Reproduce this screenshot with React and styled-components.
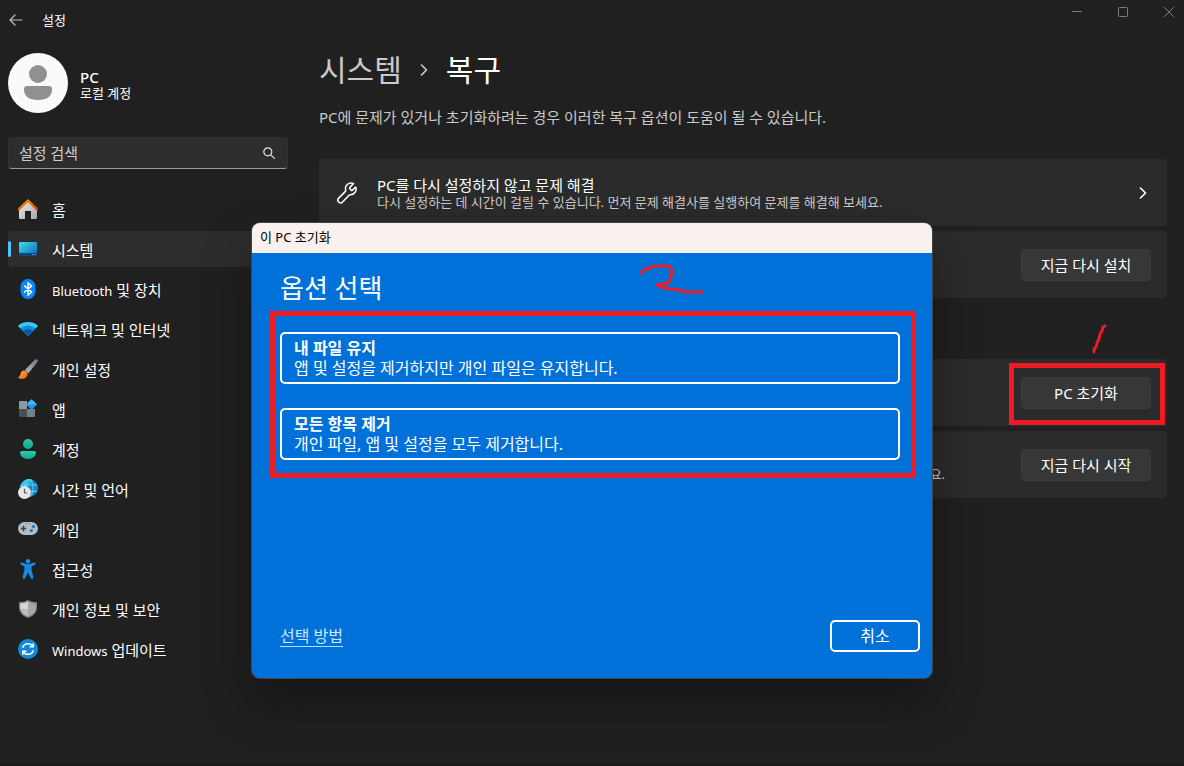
import styled, { createGlobalStyle } from "styled-components";

const GlobalStyle = createGlobalStyle`
  * {
    box-sizing: border-box;
  }
  body {
    margin: 0;
    background: #202020;
    color: #ffffff;
    font-family: "Noto Sans", "Noto Sans CJK KR", sans-serif;
    font-size: 15px;
    line-height: 20px;
  }
  button, input {
    font: inherit;
    color: inherit;
  }
  h1, h2, h3, p, ul, ol {
    margin: 0;
    padding: 0;
    font-weight: 400;
  }
`;

/* ---------- icons ---------- */

const HomeIcon = () => (
  <svg width="20" height="20" viewBox="0 0 20 20">
    <defs>
      <linearGradient id="homeWall" x1="0" y1="0" x2="1" y2="1">
        <stop offset="0" stopColor="#f2f2f2" />
        <stop offset="1" stopColor="#a5a5a5" />
      </linearGradient>
      <linearGradient id="homeRoof" x1="0" y1="0" x2="1" y2="1">
        <stop offset="0" stopColor="#f79a0c" />
        <stop offset="1" stopColor="#d2440f" />
      </linearGradient>
    </defs>
    <path d="M1 9 L10 1 L19 9 V19 Q19 20 18 20 H13 V12 H7 V20 H2 Q1 20 1 19Z" fill="url(#homeWall)" />
    <path d="M1 10.2 L10 1.6 L19 10.2" fill="none" stroke="url(#homeRoof)" strokeWidth="2.4" strokeLinecap="round" strokeLinejoin="round" />
  </svg>
);

const SystemIcon = () => (
  <svg width="20" height="20" viewBox="0 0 20 20">
    <defs>
      <linearGradient id="screen" x1="0" y1="0" x2="1" y2="1">
        <stop offset="0" stopColor="#41dbe9" />
        <stop offset="1" stopColor="#0c63bd" />
      </linearGradient>
    </defs>
    <rect x="1" y="3" width="18" height="14" rx="1" fill="url(#screen)" />
    <path d="M1 14H19V16Q19 17 18 17H2Q1 17 1 16Z" fill="#0b4a70" />
    <path d="M14 15.5H15M16.5 15.5H17.5" stroke="#7cc7ee" />
  </svg>
);

const BluetoothIcon = () => (
  <svg width="20" height="20" viewBox="0 0 20 20">
    <rect x="2.5" y="0" width="15" height="20" rx="7.5" fill="#0a84ff" />
    <path d="M6.2 6.6 L13.6 13 L10 16.2 V3.8 L13.6 7 L6.2 13.4" fill="none" stroke="#fff" strokeWidth="1.5" strokeLinejoin="round" />
  </svg>
);

const WifiIcon = () => (
  <svg width="20" height="20" viewBox="0 0 20 20">
    <path d="M10 17 L0.3 7.2 Q0 6.6 0.5 6.2 Q4.5 3 10 3 T19.5 6.2 Q20 6.6 19.7 7.2Z" fill="#37c8f3" />
    <path d="M10 17 L2.6 9.5 Q5.6 6.6 10 6.6 T17.4 9.5Z" fill="#138bdc" />
    <path d="M10 17 L5.2 12.1 Q7.2 10.3 10 10.3 T14.8 12.1Z" fill="#0b56a8" />
  </svg>
);

const BrushIcon = () => (
  <svg width="20" height="20" viewBox="0 0 20 20">
    <defs>
      <linearGradient id="handle" x1="1" y1="0" x2="0" y2="1">
        <stop offset="0" stopColor="#6b7783" />
        <stop offset="1" stopColor="#b3bac1" />
      </linearGradient>
      <linearGradient id="tip" x1="0" y1="0" x2="1" y2="1">
        <stop offset="0" stopColor="#ffb52b" />
        <stop offset="1" stopColor="#ee5a17" />
      </linearGradient>
    </defs>
    <path d="M7 11 L16.8 0.8 Q18 -0.2 19.3 0.5 Q20.3 1.4 19.6 2.8 L10.5 14.3Z" fill="url(#handle)" />
    <path d="M2.6 14.6 Q3.4 11.6 6 11.5 Q9.5 12 9.7 15.2 Q9 19.6 4 19.9 Q1 20 0 18.6 Q2.2 18 2.6 14.6Z" fill="url(#tip)" />
  </svg>
);

const AppsIcon = () => (
  <svg width="20" height="20" viewBox="0 0 20 20">
    <path d="M2 2H9V10H1V3Q1 2 2 2Z" fill="#8f979f" />
    <path d="M1 10H9V18H2Q1 18 1 17Z" fill="#4b5055" />
    <path d="M9 10H17V17Q17 18 16 18H9Z" fill="#777f87" />
    <path d="M13.6 0.2 L19 5.6 L13.6 11 L8.2 5.6Z" fill="#1c97e6" />
    <path d="M13.6 0.2 L19 5.6 L8.2 5.6Z" fill="#3bb9f4" />
  </svg>
);

const AccountIcon = () => (
  <svg width="20" height="20" viewBox="0 0 20 20">
    <defs>
      <linearGradient id="person" x1="0" y1="0" x2="0" y2="1">
        <stop offset="0" stopColor="#2cc8ab" />
        <stop offset="1" stopColor="#12a58f" />
      </linearGradient>
    </defs>
    <circle cx="10" cy="5" r="5" fill="url(#person)" />
    <path d="M3.6 12 H16.4 Q18 12 18 13.6 Q17.5 20 10 20 T2 13.6 Q2 12 3.6 12Z" fill="url(#person)" />
  </svg>
);

const TimeIcon = () => (
  <svg width="20" height="20" viewBox="0 0 20 20">
    <circle cx="11" cy="9" r="9" fill="#1788cf" />
    <path d="M2 9 A9 9 0 0 1 15 1 Q9 8 4 14Z" fill="#32bfdb" />
    <path d="M3 6H19M3 12.5H19" stroke="#6fd6ee" strokeWidth="0.9" />
    <ellipse cx="11" cy="9" rx="4" ry="9" fill="none" stroke="#6fd6ee" strokeWidth="0.9" />
    <circle cx="6.5" cy="13.5" r="6.5" fill="#e6e6e6" />
    <path d="M6.5 9.8V14H9.3" fill="none" stroke="#5a5a5a" strokeWidth="1.2" />
  </svg>
);

const GameIcon = () => (
  <svg width="20" height="20" viewBox="0 0 20 20">
    <rect x="0" y="3" width="20" height="13" rx="6.5" fill="#b6bcc2" />
    <path d="M5.5 6.8V12.2M2.8 9.5H8.2" stroke="#3d4144" strokeWidth="1.5" />
    <circle cx="15.5" cy="7.6" r="1.6" fill="#0f7bd0" />
    <circle cx="13.4" cy="11.6" r="1.6" fill="#0f7bd0" />
    <path d="M8 4.6H9M11 4.6H12" stroke="#5b6064" />
  </svg>
);

const AccessIcon = () => (
  <svg width="20" height="20" viewBox="0 0 20 20">
    <circle cx="10" cy="2.2" r="2.2" fill="#1b93e0" />
    <path
      d="M2.4 4.1 Q3 3.1 4.2 3.5 L8.4 5.1 H11.6 L15.8 3.5 Q17 3.1 17.6 4.1 Q18 5.3 16.9 5.9 L13.6 7.4 V11 L15.4 18.2 Q15.4 19.6 14.2 20 Q13 20 12.6 19 L10 13.3 L7.4 19 Q7 20 5.8 20 Q4.6 19.6 4.6 18.2 L6.4 11 V7.4 L3.1 5.9 Q2 5.3 2.4 4.1Z"
      fill="#128be0"
    />
  </svg>
);

const ShieldIcon = () => (
  <svg width="20" height="20" viewBox="0 0 20 20">
    <path d="M10 1 Q13.5 3.2 19 3.2 V9 Q18.5 16 10 19 Q1.5 16 1 9 V3.2 Q6.5 3.2 10 1Z" fill="#7f868d" />
    <path d="M10 2.4 Q13.5 4.4 17.7 4.5 V9 Q17.2 15 10 17.6Z" fill="#a2a8ae" />
    <path d="M10 2.4 Q6.5 4.4 2.3 4.5 V9 Q2.4 10 2.6 10.5 H10Z" fill="#d3d7da" />
    <path d="M2.6 10.5 Q4 15.5 10 17.6 V10.5Z" fill="#b9bec3" />
  </svg>
);

const UpdateIcon = () => (
  <svg width="20" height="20" viewBox="0 0 20 20">
    <circle cx="10" cy="10" r="10" fill="#118ade" />
    <g fill="none" stroke="#fff" strokeWidth="1.5">
      <path d="M4.6 8.8 A5.6 5.6 0 0 1 14.8 7.4" />
      <path d="M15.2 4.2 V7.8 H11.6" />
      <path d="M15.4 11.2 A5.6 5.6 0 0 1 5.2 12.6" />
      <path d="M4.8 15.8 V12.2 H8.4" />
    </g>
  </svg>
);

const BackIcon = () => (
  <svg width="14" height="12" viewBox="0 0 14 12" fill="none" stroke="#bdbdbd" strokeLinecap="round" strokeLinejoin="round">
    <path d="M13 6H1.5M6 1L1 6L6 11" strokeWidth="1.2" />
  </svg>
);

const SearchIcon = () => (
  <svg width="12" height="12" viewBox="0 0 12 12" fill="none" stroke="#e4e4e4" strokeWidth="1.2" strokeLinecap="round">
    <circle cx="4.8" cy="4.8" r="4" />
    <path d="M7.8 7.8L11.4 11.4" />
  </svg>
);

const WrenchIcon = () => (
  <svg width="20" height="22" viewBox="0 0 20 22" fill="none" stroke="#fff" strokeWidth="1.5" strokeLinejoin="round">
    <path d="M16.6 1.6 A5.6 5.6 0 0 0 8.7 8.2 Q8.800 9 8.2 9.6 L1.7 16.1 A2.7 2.7 0 0 0 5.6 20 L12 13.3 Q12.6 12.7 13.4 12.7 A5.6 5.6 0 0 0 18.7 5 L15.6 8.1 Q14.9 8.7 14.2 8.1 L12.9 6.8 Q12.3 6 12.9 5.4Z" />
  </svg>
);

const ChevronIcon = ({ color }) => (
  <svg width="8" height="12" viewBox="0 0 8 12" fill="none" stroke={color} strokeWidth="1.6" strokeLinecap="round" strokeLinejoin="round">
    <path d="M1.5 1L6.5 6L1.5 11" />
  </svg>
);

const AvatarIcon = () => (
  <svg width="60" height="60" viewBox="0 0 60 60">
    <circle cx="30" cy="30" r="30" fill="#fafafa" />
    <circle cx="30" cy="21" r="9" fill="#919191" />
    <path d="M19 33 H41 Q44 33 44 36 Q44 47 30 47 T16 36 Q16 33 19 33Z" fill="#919191" />
  </svg>
);

const navItems = [
  { label: "홈", Icon: HomeIcon },
  { label: "시스템", Icon: SystemIcon, active: true },
  { latin: "Bluetooth", label: " 및 장치", Icon: BluetoothIcon },
  { label: "네트워크 및 인터넷", Icon: WifiIcon },
  { label: "개인 설정", Icon: BrushIcon },
  { label: "앱", Icon: AppsIcon },
  { label: "계정", Icon: AccountIcon },
  { label: "시간 및 언어", Icon: TimeIcon },
  { label: "게임", Icon: GameIcon },
  { label: "접근성", Icon: AccessIcon },
  { label: "개인 정보 및 보안", Icon: ShieldIcon },
  { latin: "Windows", label: " 업데이트", Icon: UpdateIcon },
];

const options = [
  { title: "내 파일 유지", text: "앱 및 설정을 제거하지만 개인 파일은 유지합니다." },
  { title: "모든 항목 제거", text: "개인 파일, 앱 및 설정을 모두 제거합니다." },
];

const SettingCard = ({ title, text, children }) => (
  <SCard>
    <WrenchIcon />
    <SCardText>
      {title && <h3>{title}</h3>}
      {text && <SCardDesc>{text}</SCardDesc>}
    </SCardText>
    {children}
  </SCard>
);

const Sidebar = () => (
  <SSidebar>
    <SProfile>
      <AvatarIcon />
      <SProfileText>
        <SUserName>PC</SUserName>
        <SUserType>로컬 계정</SUserType>
      </SProfileText>
    </SProfile>
    <SSearch>
      <SSearchInput type="search" placeholder="설정 검색" aria-label="설정 검색" />
      <SearchIcon />
    </SSearch>
    <nav>
      <SNavList>
        {navItems.map(({ latin, label, Icon, active }) => (
          <li key={label}>
            <SNavLink href="#" $active={active}>
              <Icon />
              <SNavText>
                {latin && <SLatin>{latin}</SLatin>}
                {label}
              </SNavText>
            </SNavLink>
          </li>
        ))}
      </SNavList>
    </nav>
  </SSidebar>
);

const ResetDialog = () => (
  <SOverlay>
    <SDialog role="dialog" aria-labelledby="dialog-title">
      <SDialogTitle id="dialog-title">이 PC 초기화</SDialogTitle>
      <SDialogBody>
        <SDialogHeading>옵션 선택</SDialogHeading>
        <SOptions>
          {options.map((option) => (
            <SOption key={option.title}>
              <b>{option.title}</b>
              <span>{option.text}</span>
            </SOption>
          ))}
        </SOptions>
        <SDialogFooter>
          <SHelpLink href="#">선택 방법</SHelpLink>
          <SCancel>취소</SCancel>
        </SDialogFooter>
        <SMarkTwo width="66" height="32" viewBox="0 0 66 32">
          <path d="M3 10L6 7L10 6L12 4L18 3H31L33 6L34 9L33 14L30 20L24 21L19 22L23 24L32 26L43 27L46 29H65" />
        </SMarkTwo>
      </SDialogBody>
    </SDialog>
  </SOverlay>
);

const App = () => (
  <SWindow>
    <GlobalStyle />
    <STitleBar>
      <SBack aria-label="뒤로">
        <BackIcon />
      </SBack>
      <SAppName>설정</SAppName>
      <SControls>
        <SControl aria-label="최소화">
          <svg width="10" height="10" viewBox="0 0 10 10"><path d="M0 4.5H10" stroke="#7d7d7d" /></svg>
        </SControl>
        <SControl aria-label="최대화">
          <svg width="10" height="10" viewBox="0 0 10 10"><rect x="0.5" y="0.5" width="9" height="9" rx="1" fill="none" stroke="#7d7d7d" /></svg>
        </SControl>
        <SControl aria-label="닫기">
          <svg width="10" height="10" viewBox="0 0 10 10"><path d="M0 0L10 10M10 0L0 10" stroke="#7d7d7d" /></svg>
        </SControl>
      </SControls>
    </STitleBar>
    <SBody>
      <Sidebar />
      <SMain>
        <SBreadcrumb>
          <SCrumbLink href="#">시스템</SCrumbLink>
          <ChevronIcon color="#cfcfcf" />
          <h1>복구</h1>
        </SBreadcrumb>
        <SIntro>PC에 문제가 있거나 초기화하려는 경우 이러한 복구 옵션이 도움이 될 수 있습니다.</SIntro>
        <SCards>
          <SettingCard title="PC를 다시 설정하지 않고 문제 해결" text="다시 설정하는 데 시간이 걸릴 수 있습니다. 먼저 문제 해결사를 실행하여 문제를 해결해 보세요.">
            <SChevronBox>
              <ChevronIcon color="#ffffff" />
            </SChevronBox>
          </SettingCard>
          <SettingCard>
            <SButton>지금 다시 설치</SButton>
          </SettingCard>
        </SCards>
        <SCards>
          <SettingCard>
            <SMarked>
              <SButton>PC 초기화</SButton>
              <SMarkOne width="18" height="32" viewBox="0 0 18 32">
                <path d="M14 3L12 4L11 8L9 11L8 16L6 20L5 24L3 26V29" />
              </SMarkOne>
            </SMarked>
          </SettingCard>
          <SettingCard text="디스크 또는 USB 드라이브에서 시작하기를 포함하여 시작 설정을 변경하려면 디바이스를 다시 시작하세요.">
            <SButton>지금 다시 시작</SButton>
          </SettingCard>
        </SCards>
      </SMain>
    </SBody>
    <ResetDialog />
  </SWindow>
);

export default App;

/* ---------- window ---------- */

const SWindow = styled.div`
  min-height: 100vh;
  border-bottom: 1px solid #161616;
`;
const STitleBar = styled.header`
  display: flex;
  height: 40px;
`;
const SBack = styled.button`
  display: flex;
  align-items: center;
  justify-content: center;
  width: 32px;
  padding: 0;
  border: none;
  background: none;
`;
const SAppName = styled.span`
  padding-left: 10px;
  font-size: 13px;
  line-height: 40px;
`;
const SControls = styled.div`
  display: flex;
  gap: 16px;
  height: 24px;
  margin-left: auto;
`;
const SControl = styled.button`
  display: flex;
  align-items: center;
  justify-content: center;
  width: 30px;
  padding: 0;
  border: none;
  background: none;
`;
const SBody = styled.div`
  display: flex;
  gap: 31px;
  padding: 0 17px 0 8px;
`;

/* ---------- sidebar ---------- */

const SSidebar = styled.aside`
  flex: 0 0 280px;
  padding-top: 13px;
`;
const SProfile = styled.div`
  display: flex;
  align-items: center;
  gap: 12px;
`;
const SProfileText = styled.div`
  padding-top: 3px;
  line-height: 16px;
`;
const SUserName = styled.p`
  font-weight: 500;
`;
const SUserType = styled.p`
  font-size: 13px;
`;
const SSearch = styled.div`
  display: flex;
  align-items: center;
  height: 32px;
  margin: 24px 0 22px;
  padding: 0 12px 0 10px;
  border: 1px solid #303030;
  border-bottom-color: #9a9a9a;
  border-radius: 4px;
  background: #2d2d2d;
`;
const SSearchInput = styled.input`
  flex: 1;
  min-width: 0;
  padding: 0;
  border: none;
  outline: none;
  background: none;
  appearance: none;
  &::placeholder {
    color: #cecece;
  }
`;
const SNavList = styled.ul`
  display: flex;
  flex-direction: column;
  gap: 4px;
  list-style: none;
`;
const SNavLink = styled.a`
  position: relative;
  display: flex;
  align-items: center;
  gap: 14px;
  height: 36px;
  padding-left: 10px;
  border-radius: 4px;
  background: ${(props) => (props.$active ? "#2d2d2d" : "none")};
  color: #ffffff;
  text-decoration: none;
  &::before {
    content: "";
    display: ${(props) => (props.$active ? "block" : "none")};
    position: absolute;
    left: 0;
    top: 10px;
    width: 3px;
    height: 16px;
    border-radius: 2px;
    background: #4cc2ff;
  }
`;
const SNavText = styled.span`
  padding-top: 2px;
`;
const SLatin = styled.span`
  font-size: 13px;
`;

/* ---------- main ---------- */

const SMain = styled.main`
  display: flex;
  flex-direction: column;
  flex: 1;
  min-width: 0;
  padding-top: 10px;
`;
const SBreadcrumb = styled.div`
  display: flex;
  align-items: center;
  gap: 18px;
  line-height: 40px;
  font-size: 30px;
  h1 {
    font-size: 30px;
  }
`;
const SCrumbLink = styled.a`
  color: #cacaca;
  text-decoration: none;
`;
const SIntro = styled.p`
  margin: 17px 0 32px;
  color: #cacaca;
`;
const SCards = styled.div`
  display: flex;
  flex-direction: column;
  gap: 5px;
  & + & {
    margin-top: 61px;
  }
`;
const SCard = styled.section`
  display: flex;
  align-items: center;
  gap: 20px;
  min-height: 67px;
  padding: 0 16px 0 18px;
  border-radius: 4px;
  background: #2b2b2b;
`;
const SCardText = styled.div`
  display: flex;
  flex-direction: column;
  flex: 1;
  justify-content: flex-end;
  min-height: 34px;
  h3 {
    font-size: 15px;
    line-height: 18px;
  }
`;
const SCardDesc = styled.p`
  color: #cacaca;
  font-size: 13px;
  line-height: 16px;
`;
const SChevronBox = styled.span`
  display: flex;
  padding-right: 4px;
`;
const SButton = styled.button`
  width: 130px;
  height: 32px;
  padding: 0;
  border: 1px solid #3c3c3c;
  border-radius: 4px;
  background: #373737;
`;
const SMarked = styled.div`
  position: relative;
  &::after {
    content: "";
    position: absolute;
    inset: -14px -14px -16px -12px;
    border: 5px solid #ed1c24;
    pointer-events: none;
  }
`;
const SMarkOne = styled.svg`
  position: absolute;
  left: 70px;
  top: -54px;
  fill: none;
  stroke: #ed1c24;
  stroke-width: 3px;
  stroke-linecap: round;
  stroke-linejoin: round;
`;

/* ---------- dialog ---------- */

const SOverlay = styled.div`
  position: absolute;
  top: 223px;
  left: 0;
  right: 0;
  display: flex;
  justify-content: center;
`;
const SDialog = styled.div`
  width: 680px;
  max-width: 100%;
  overflow: hidden;
  border-radius: 8px;
  background: #0071d8;
  box-shadow: 0 0 0 1px #434343, 0 24px 48px rgba(0, 0, 0, 0.35);
`;
const SDialogTitle = styled.h2`
  padding-left: 8px;
  background: #faf0ee;
  color: #000000;
  font-size: 13px;
  line-height: 28px;
  padding-bottom: 2px;
`;
const SDialogBody = styled.div`
  position: relative;
  display: flex;
  flex-direction: column;
  min-height: 425px;
  padding: 17px 12px 26px 28px;
`;
const SDialogHeading = styled.h3`
  font-size: 26px;
  line-height: 36px;
`;
const SOptions = styled.div`
  position: relative;
  display: flex;
  flex-direction: column;
  gap: 24px;
  margin: 26px 20px 0 0;
  &::after {
    content: "";
    position: absolute;
    inset: -21px -16px -18px -10px;
    border: 5px solid #ed1c24;
    pointer-events: none;
  }
`;
const SOption = styled.button`
  display: flex;
  flex-direction: column;
  padding: 4px 12px;
  border: 2px solid #ffffff;
  border-radius: 5px;
  background: none;
  font-size: 16px;
  line-height: 20px;
  text-align: left;
  b {
    font-weight: 700;
  }
`;
const SDialogFooter = styled.div`
  display: flex;
  align-items: center;
  justify-content: space-between;
  margin-top: auto;
  font-size: 16px;
`;
const SHelpLink = styled.a`
  border-bottom: 1px solid #b5dcff;
  color: #cfe8ff;
  text-decoration: none;
`;
const SCancel = styled.button`
  width: 90px;
  height: 32px;
  padding: 0;
  border: 2px solid #ffffff;
  border-radius: 5px;
  background: none;
`;
const SMarkTwo = styled.svg`
  position: absolute;
  left: 386px;
  top: 10px;
  fill: none;
  stroke: #ed1c24;
  stroke-width: 3px;
  stroke-linecap: round;
  stroke-linejoin: round;
`;
